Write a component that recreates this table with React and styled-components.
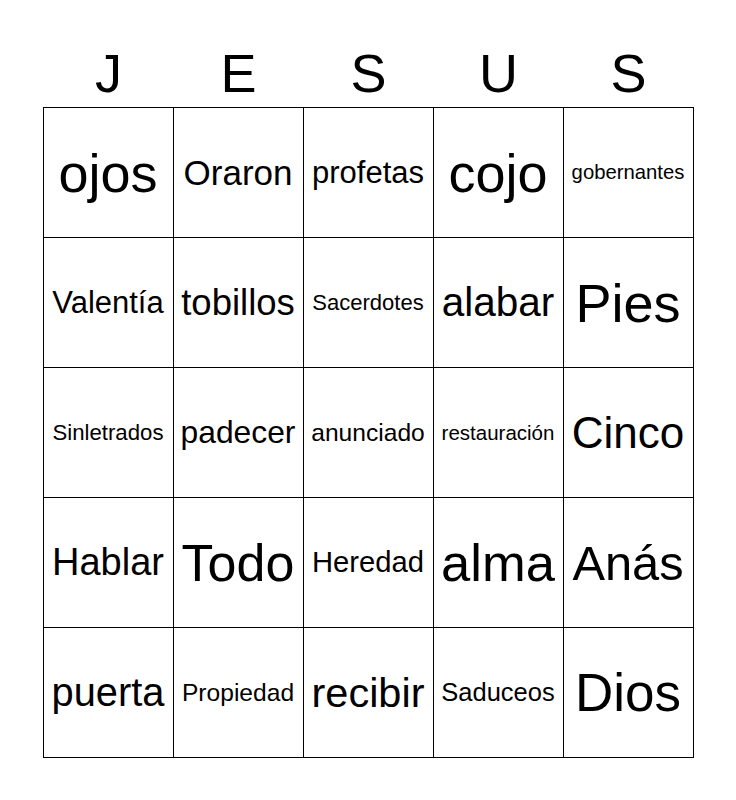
import { styled, createGlobalStyle } from "styled-components";

const GlobalStyle = createGlobalStyle`
    html, body {
        margin: 0;
        padding: 0;
        background: #fff;
    }
    body {
        font-family: "Liberation Sans", Arial, sans-serif;
        color: #000;
    }
`;

const Page = styled.div`
    width: 736px;
    height: 800px;
    display: flex;
    flex-direction: column;
    align-items: center;
`;

const HeaderRow = styled.div`
    display: grid;
    grid-template-columns: repeat(5, 130px);
    padding-top: 46px;
    margin-bottom: 7px;
    margin-left: 1px;
`;

const Letter = styled.div`
    text-align: center;
    font-size: 54px;
    line-height: 54px;
`;

const Board = styled.div`
    display: grid;
    grid-template-columns: repeat(5, 129px);
    grid-auto-rows: 129px;
    gap: 1px;
    border: 1px solid #000;
    background: #000;
`;

const Cell = styled.div`
    background: #fff;
    display: flex;
    align-items: center;
    justify-content: center;
    font-size: ${(p) => p.$size}px;
    white-space: nowrap;
`;

const letters = ["J", "E", "S", "U", "S"];

const words = [
    ["ojos", 54], ["Oraron", 35], ["profetas", 31], ["cojo", 54], ["gobernantes", 20.3],
    ["Valentía", 31], ["tobillos", 36.5], ["Sacerdotes", 22], ["alabar", 40.5], ["Pies", 54],
    ["Sinletrados", 22.2], ["padecer", 31.8], ["anunciado", 24.6], ["restauración", 20.5], ["Cinco", 44],
    ["Hablar", 38], ["Todo", 52], ["Heredad", 29.2], ["alma", 52.5], ["Anás", 48.8],
    ["puerta", 39.8], ["Propiedad", 24.6], ["recibir", 41.5], ["Saduceos", 25.5], ["Dios", 53],
];

export default function App() {
    return (
        <>
            <GlobalStyle />
            <Page>
                <HeaderRow>
                    {letters.map((l, i) => (
                        <Letter key={i}>{l}</Letter>
                    ))}
                </HeaderRow>
                <Board>
                    {words.map(([w, size]) => (
                        <Cell key={w} $size={size}>{w}</Cell>
                    ))}
                </Board>
            </Page>
        </>
    );
}
